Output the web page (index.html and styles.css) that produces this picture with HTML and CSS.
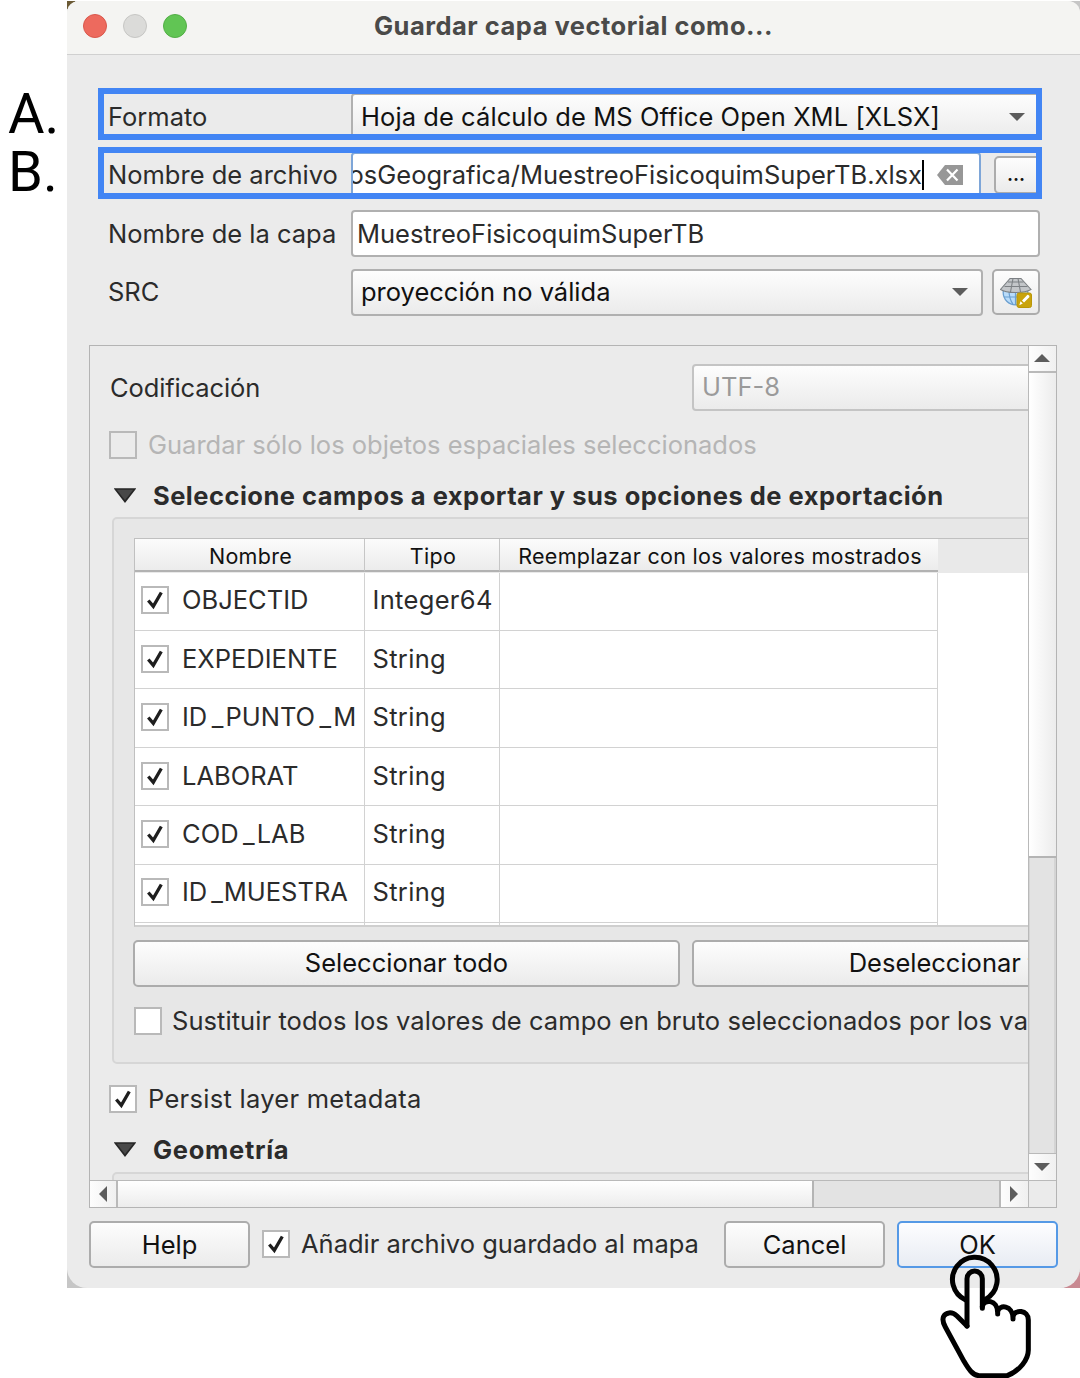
FILE: index.html
```html
<!DOCTYPE html>
<html lang="es">
<head>
<meta charset="utf-8">
<title>Guardar capa vectorial como...</title>
<link rel="stylesheet" href="styles.css">
</head>
<body>
<svg class="defs" width="0" height="0" aria-hidden="true">
  <symbol id="tick" viewBox="0 0 28 28"><path d="M7.300 14.500 L12.300 20.300 L20.300 6.500" fill="none" stroke="#1e1e1e" stroke-width="3.300"/></symbol>
  <symbol id="fold" viewBox="0 0 22 15"><path d="M1.200 1 H20.800 L11 13.600 Z" fill="#484848" stroke="#262626" stroke-width="1.600"/></symbol>
</svg>
<main class="page">
  <aside class="marks"><span class="mark">A.</span><span class="mark">B.</span></aside>
  <div class="backdrop">
    <section class="window">
      <header class="titlebar">
        <div class="lights"><i class="light red"></i><i class="light gray"></i><i class="light green"></i></div>
        <h1 class="title">Guardar capa vectorial como...</h1>
      </header>

      <div class="form">
        <div class="row marked">
          <label class="label">Formato</label>
          <div class="field combo"><span class="format-name">Hoja de cálculo de MS Office Open XML [XLSX]</span><i class="arrow down"></i></div>
        </div>
        <div class="row marked">
          <label class="label">Nombre de archivo</label>
          <div class="field input focus"><div class="clip"><span>osGeografica/MuestreoFisicoquimSuperTB.xlsx</span></div><i class="caret"></i>
            <svg class="clear" viewBox="0 0 26 20"><path d="M8 0 H26 V20 H8 L0 10 Z" fill="#979797"/><path d="M10 4.500 L20.500 15.500 M20.500 4.500 L10 15.500" stroke="#fff" stroke-width="2.200"/></svg>
          </div>
          <button class="btn browse">...</button>
        </div>
        <div class="row">
          <label class="label">Nombre de la capa</label>
          <div class="field input"><span>MuestreoFisicoquimSuperTB</span></div>
        </div>
        <div class="row">
          <label class="label">SRC</label>
          <div class="field combo src"><span>proyección no válida</span><i class="arrow down"></i></div>
          <button class="btn globe">
            <svg width="32" height="32" viewBox="0 0 32 32">
              <circle cx="15.500" cy="16.500" r="12.300" fill="#b9dcfa" stroke="#6b9fd0" stroke-width="1.300"/>
              <path d="M15.500 14 V29 M9 14 Q9 23 13 28 M22 14 Q22 23 18 28 M4 21 H27" fill="none" stroke="#6b9fd0" stroke-width="1.200"/>
              <path d="M10 2.500 H21 L31 13.500 Q26 16.500 15.500 16.500 Q5 16.500 .5 13.500 Z" fill="#c3c6c9" stroke="#7c8084" stroke-width="1.100"/>
              <path d="M13 2.500 L10.500 16 M18 2.500 L20.500 16 M8 6 H23.500 M4.500 10.500 H27.500" fill="none" stroke="#7c8084" stroke-width="1.100"/>
              <rect x="17" y="17" width="14.500" height="14.500" rx="2" fill="#c9a30c" stroke="#b99608"/>
              <path d="M19.300 29.300 L20.500 25.300 L22.800 27.600 Z M22 24.600 L27.500 18.800 Q29.800 19 29.500 21 L24 26.600 Z" fill="#fff"/>
            </svg>
          </button>
        </div>
      </div>

      <div class="scroller">
        <div class="view">
          <div class="content">
            <div class="encoding"><span class="encoding-label">Codificación</span><div class="field combo utf"><span>UTF-8</span></div></div>
            <div class="check only off"><i class="box"></i><span>Guardar sólo los objetos espaciales seleccionados</span></div>
            <h2 class="section"><svg class="fold"><use href="#fold"/></svg><span>Seleccione campos a exportar y sus opciones de exportación</span></h2>
            <div class="group">
              <div class="table">
                <div class="thead"><div class="th">Nombre</div><div class="th">Tipo</div><div class="th last">Reemplazar con los valores mostrados</div></div>
                <div class="tr"><div class="td"><i class="box"><svg><use href="#tick"/></svg></i><span>OBJECTID</span></div><div class="td type">Integer64</div><div class="td"></div></div>
                <div class="tr"><div class="td"><i class="box"><svg><use href="#tick"/></svg></i><span>EXPEDIENTE</span></div><div class="td type">String</div><div class="td"></div></div>
                <div class="tr"><div class="td"><i class="box"><svg><use href="#tick"/></svg></i><span>ID<span class="us">_</span>PUNTO<span class="us">_</span>M</span></div><div class="td type">String</div><div class="td"></div></div>
                <div class="tr"><div class="td"><i class="box"><svg><use href="#tick"/></svg></i><span>LABORAT</span></div><div class="td type">String</div><div class="td"></div></div>
                <div class="tr"><div class="td"><i class="box"><svg><use href="#tick"/></svg></i><span>COD<span class="us">_</span>LAB</span></div><div class="td type">String</div><div class="td"></div></div>
                <div class="tr"><div class="td"><i class="box"><svg><use href="#tick"/></svg></i><span class="tight">ID<span class="us">_</span>MUESTRA</span></div><div class="td type">String</div><div class="td"></div></div>
                <div class="tr"><div class="td"></div><div class="td"></div><div class="td"></div></div>
              </div>
              <div class="pair"><button class="btn">Seleccionar todo</button><button class="btn">Deseleccionar todo</button></div>
              <div class="check raw"><i class="box"></i><span>Sustituir todos los valores de campo en bruto seleccionados por los va</span></div>
            </div>
            <div class="check persist"><i class="box"><svg><use href="#tick"/></svg></i><span>Persist layer metadata</span></div>
            <h2 class="section geo"><svg class="fold"><use href="#fold"/></svg><span>Geometría</span></h2>
            <div class="group next"></div>
          </div>
        </div>
        <div class="vbar"><div class="step"><i class="arrow up"></i></div><div class="thumb"></div><div class="track"></div><div class="step end"><i class="arrow down"></i></div></div>
        <div class="hbar"><div class="step"><i class="arrow left"></i></div><div class="thumb"></div><div class="track"></div><div class="step end"><i class="arrow right"></i></div></div>
        <div class="corner"></div>
      </div>

      <footer class="actions">
        <button class="btn">Help</button>
        <div class="check add"><i class="box"><svg><use href="#tick"/></svg></i><span>Añadir archivo guardado al mapa</span></div>
        <button class="btn">Cancel</button>
        <button class="btn primary">OK</button>
      </footer>
    </section>
  </div>
  <svg class="pointer" viewBox="0 0 480 504" aria-hidden="true">
    <g fill="none" stroke="#000" stroke-width="15" stroke-linecap="round" stroke-linejoin="round">
      <path d="M137 270 A67 67 0 1 1 196 268"/>
      <path d="M141 348 L111 318 C95 303 77 308 71 319 C65 331 71 342 76 351 L132 454 C145 476 158 497 178 497 H262 C300 482 325 448 325 420 V330 C325 299 283 297 279 320 V327 M279 325 C279 285 237 282 233 305 V312 M233 308 C233 268 191 266 187 290"/>
      <path d="M141 348 V206 A23 23 0 0 1 187 206 V295"/>
    </g>
  </svg>
</main>
</body>
</html>
```
FILE: styles.css
```css
*, ::after { box-sizing: border-box; }
body { margin: 0; background: #fff; font-family: Inter, "Liberation Sans", sans-serif; font-size: 25.5px; line-height: 30px; color: #2b2b2b; }
.defs { position: absolute; }
.page { position: relative; display: flex; width: 1080px; height: 1378px; overflow: hidden; }
span, .th, .title, .label, .btn { white-space: nowrap; }
i { display: block; flex: none; }
button { font: inherit; color: #111; padding: 0; }

.marks { width: 67px; padding: 85px 0 0 8px; font-family: Roboto, sans-serif; font-size: 56px; color: #000; }
.mark { display: block; height: 58px; line-height: 58px; }

.backdrop { width: 1013px; height: 1287px; margin-top: 1px; background: linear-gradient(135deg, #6b5a35 0 6px, transparent 6px), linear-gradient(315deg, #c98a92 0 12px, transparent 12px), #c6c6c6; }
.window { width: 1013px; height: 1287px; background: #ebebeb; border-radius: 12px 12px 20px 20px; overflow: hidden; }

.titlebar { display: grid; grid-template-columns: 130px 1fr 130px; align-items: center; height: 54px; padding: 0 0 3px; background: #f4f4f2; border-bottom: 1px solid #d0d0d0; }
.lights { display: flex; gap: 16px; padding-left: 16px; }
.light { width: 24px; height: 24px; border-radius: 50%; border: 1px solid; }
.red { background: #ed6a5e; border-color: #d9574c; }
.gray { background: #dbdbd9; border-color: #c6c6c4; }
.green { background: #61c554; border-color: #52ae46; }
.title { margin: 0; padding-bottom: 1px; font-size: 25.5px; font-weight: 700; letter-spacing: .5px; color: #4a4a49; text-align: center; line-height: 30px; }

.form { display: grid; gap: 11.5px; padding: 38px 0 0 39px; }
.row { position: relative; display: flex; align-items: center; height: 47px; }
.marked::after { content: ""; position: absolute; left: -8px; top: -5px; width: 944px; height: 52px; border: 6px solid #4285f4; }
.label { width: 245px; padding-left: 2px; }
.field { display: flex; align-items: center; width: 689px; height: 47px; border: 2px solid #b0b0b0; border-radius: 4px; }
.combo { justify-content: space-between; padding: 0 13px 0 8px; background: linear-gradient(#fdfdfd, #ebebeb); color: #111; }
.format-name { letter-spacing: .07px; }
.src { width: 632px; }
.input { background: #fff; padding-left: 4px; }
.focus { width: 630px; border-color: #7ea6d8; padding-left: 0; }
.clip { display: flex; justify-content: flex-end; width: 569px; overflow: hidden; }
.caret { width: 2px; height: 30px; background: #000; }
.clear { width: 26px; height: 20px; margin-left: 13px; }
.btn { display: flex; align-items: center; justify-content: center; flex: none; height: 47px; border: 2px solid #acacac; border-radius: 5px; background: linear-gradient(#fdfdfd, #ebebeb); }
.browse { width: 48px; height: 38px; margin-left: 13px; font-size: 19px; font-weight: 600; padding-right: 4px; }
.globe { width: 48px; height: 46px; margin-left: 9px; }

.arrow { width: 0; height: 0; border: 8px solid transparent; }
.arrow.down { border-top-color: #5c5c5c; border-bottom: 0; }
.arrow.up { border-bottom-color: #5c5c5c; border-top: 0; }
.arrow.left { border-right-color: #5c5c5c; border-left: 0; }
.arrow.right { border-left-color: #5c5c5c; border-right: 0; }

.scroller { display: grid; grid-template-columns: 938px 28px; grid-template-rows: 834px 27px; width: 968px; height: 863px; margin: 29px 0 0 22px; border: 1px solid #b4b4b4; }
.view { overflow: hidden; }
.content { width: 1180px; height: 834px; overflow: hidden; }
.encoding { display: flex; align-items: center; justify-content: space-between; height: 47px; margin: 18px 0 0 20px; }
.encoding-label { padding-top: 2px; letter-spacing: -.12px; }
.utf { width: 578px; border-color: #c4c4c4; color: #9a9a9a; }
.check { display: flex; align-items: center; gap: 11px; height: 28px; }
.box { display: flex; width: 28px; height: 28px; background: #fff; border: 2px solid #b9b9b9; }
.box svg { width: 28px; height: 28px; margin: -2px; flex: none; }
.only { margin: 20px 0 0 19px; }
.off { color: #b5b5b5; }
.off .box { background: none; }
.section { display: flex; align-items: center; gap: 17px; height: 30px; margin: 22px 0 0 24px; font-size: 25.5px; font-weight: 700; letter-spacing: .49px; line-height: 30px; }
.fold { width: 22px; height: 15px; flex: none; }
.group { width: 1200px; height: 547px; margin: 6px 0 0 22px; padding: 19px 0 0 20px; background: #e7e7e7; border: 2px solid #d6d6d6; border-radius: 5px; }
.table { width: 1110px; height: 389px; overflow: hidden; background: #fff; border: 1px solid #c0c0c0; border-bottom: 2px solid #cfcfcf; }
.thead, .tr { display: grid; grid-template-columns: 230px 135px 438px 1fr; }
.thead { height: 34px; background: #e9e9e9; color: #111; font-size: 21.5px; letter-spacing: .3px; }
.th { display: flex; align-items: center; justify-content: center; height: 33px; padding: 4px 0 0 2px; background: linear-gradient(#fbfbfb, #ececec); border-bottom: 2px solid #b2b2b2; border-right: 1px solid #c6c6c6; }
.th.last { border-right: 0; }
.tr { height: 58.45px; }
.td { display: flex; align-items: center; gap: 13px; padding: 0 0 2px 6px; border-right: 1px solid #d2d2d2; border-bottom: 1px solid #d2d2d2; }
.type { padding-left: 7.5px; letter-spacing: .33px; }
.us { margin: 0 2px 0 4.5px; }
.tight .us { margin: 0 0 0 4px; }
.pair { display: flex; gap: 12px; margin-top: 13px; margin-left: -1px; }
.pair .btn { width: 547px; }
.raw { margin-top: 20px; gap: 10px; letter-spacing: .06px; }
.persist { margin: 21px 0 0 19px; letter-spacing: .28px; }
.geo { margin-top: 22px; letter-spacing: .7px; }
.group.next { margin-top: 7px; height: 40px; }

.step { display: flex; align-items: center; justify-content: center; background: linear-gradient(90deg, #fdfdfd, #f0f0f0); }
.track { background: #e3e3e3; }
.vbar { display: grid; grid-template-rows: 27px 485px 1fr 27px; border-left: 1px solid #b9b9b9; }
.vbar .thumb { background: linear-gradient(90deg, #fff, #ececec); border-bottom: 2px solid #b4b4b4; }
.vbar .step { border-bottom: 2px solid #b9b9b9; padding-right: 2px; }
.vbar .end { border-bottom: 0; border-top: 1px solid #b9b9b9; }
.vbar .track { border: solid #d4d4d4; border-width: 0 2px 0 1px; }
.hbar { display: grid; grid-template-columns: 28px 696px 1fr 29px; border-top: 1px solid #b9b9b9; }
.hbar .thumb { background: linear-gradient(#fff, #ececec); border-right: 2px solid #b4b4b4; }
.hbar .step { border-right: 2px solid #b9b9b9; }
.hbar .end { border-right: 0; border-left: 2px solid #b9b9b9; padding-right: 2px; }
.corner { border: 1px solid #b9b9b9; border-right: 0; border-bottom: 0; }

.actions { display: flex; align-items: center; height: 47px; margin: 13px 0 0 22px; }
.actions .btn { width: 161px; padding-top: 1px; }
.add { width: 462px; margin: 0 0 0 12px; }
.actions .primary { margin-left: 12px; border-color: #5599e6; background: linear-gradient(#fdfdff, #e8ecf3); }

.pointer { position: absolute; left: 920px; top: 1210px; width: 160px; height: 168px; }
```
